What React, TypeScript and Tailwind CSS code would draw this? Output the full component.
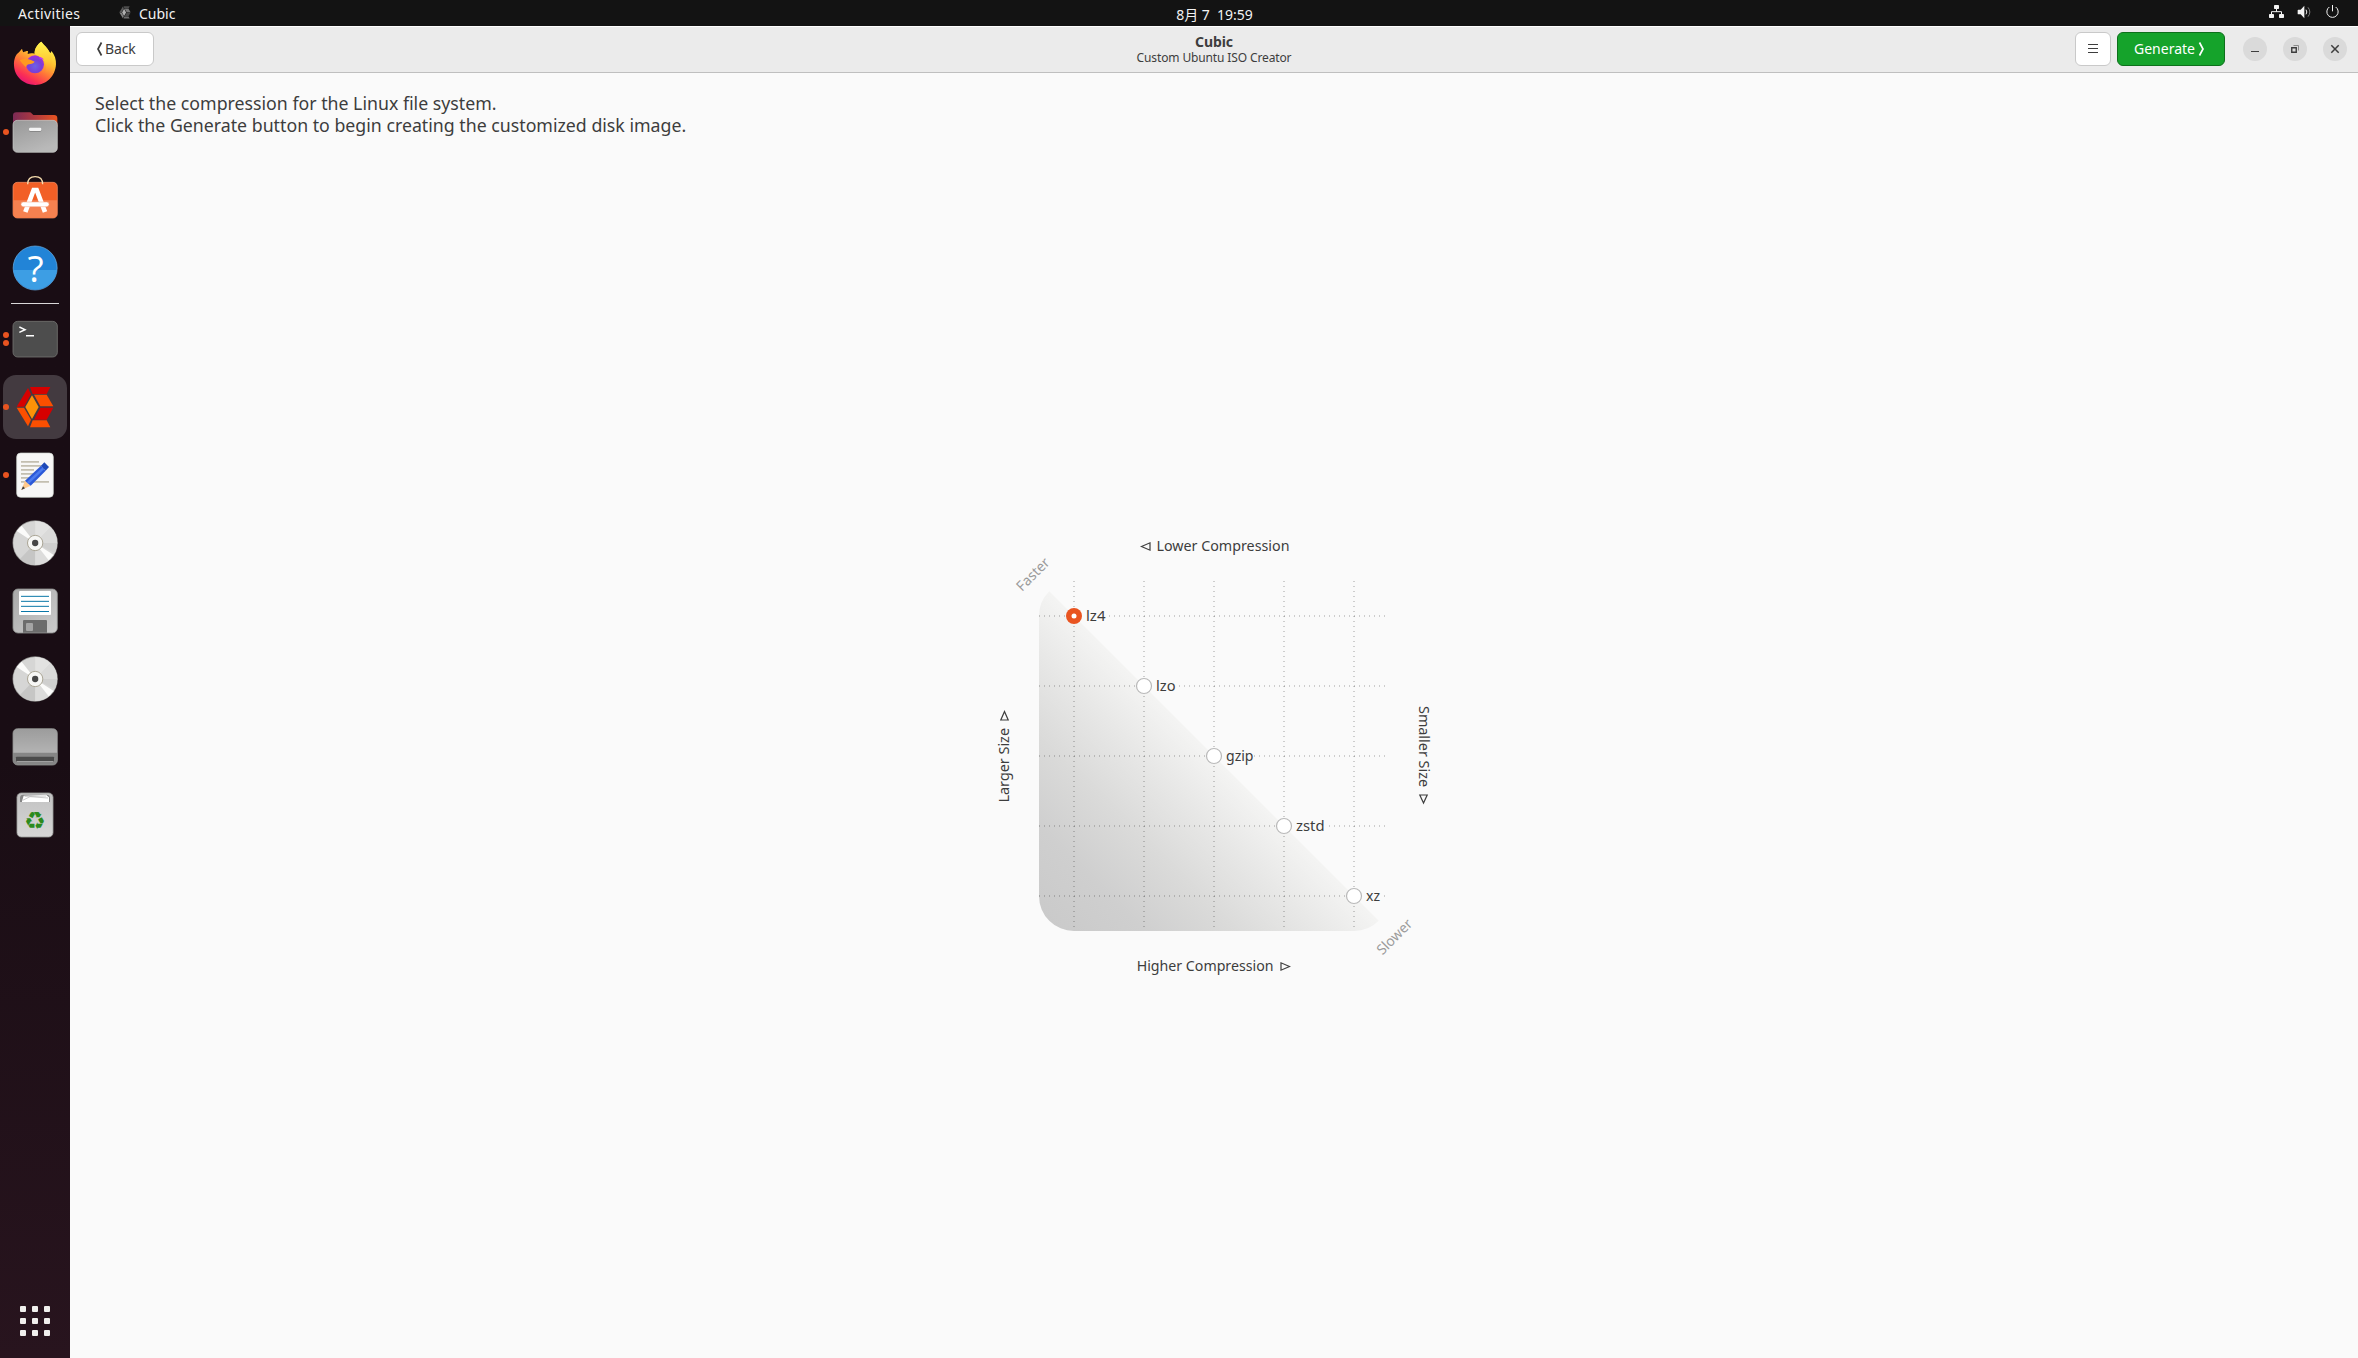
import type { ReactNode } from "react";

type DockEntry = {
  name: string;
  top: number;
  dots?: number;
  active?: boolean;
  art: ReactNode;
};

const Disc = ({ cy }: { cy: number }) => (
  <g>
    <circle cx="105.5" cy={cy} r="68" fill="#8b8b89" />
    <circle cx="105.5" cy={cy} r="66" fill="#d6d6d5" />
    <path d={`M105.5 ${cy}V${cy - 66}A66 66 0 0 1 152 ${cy - 47}Z`} fill="#e2e2e1" />
    <path d={`M105.5 ${cy}L152 ${cy - 47}A66 66 0 0 1 171.500 ${cy}Z`} fill="#dadad9" />
    <path d={`M105.5 ${cy}H171.500A66 66 0 0 1 164 ${cy + 30}Z`} fill="#cfcfce" />
    <path d={`M105.5 ${cy}V${cy + 66}A66 66 0 0 1 60 ${cy + 48}Z`} fill="#c6c6c5" />
    <path d={`M105.5 ${cy}L152 ${cy + 47}A66 66 0 0 1 105.5 ${cy + 66}Z`} fill="#dcdcdb" />
    <path d={`M105.5 ${cy}L50 ${cy - 36}L65 ${cy - 52}Z`} fill="#fbfbfa" />
    <path d={`M105.5 ${cy}L161 ${cy + 36}L146 ${cy + 52}Z`} fill="#fbfbfa" />
    <circle cx="105.5" cy={cy} r="23" fill="#f7f7f5" stroke="#aaa595" strokeWidth="3" />
    <circle cx="105.5" cy={cy} r="9.500" fill="#474747" />
  </g>
);

const favorites: DockEntry[] = [
  {
    name: "Firefox",
    top: 36,
    art: (
      <g>
        <defs>
          <linearGradient id="ff-body" x1="0.8" y1="0.05" x2="0.25" y2="1">
            <stop offset="0.05" stopColor="#fff14a" />
            <stop offset="0.35" stopColor="#ffbd2e" />
            <stop offset="0.6" stopColor="#ff7139" />
            <stop offset="0.82" stopColor="#fb2f55" />
            <stop offset="1" stopColor="#e2107c" />
          </linearGradient>
          <radialGradient id="ff-globe" cx="0.5" cy="0.6" r="0.6">
            <stop offset="0" stopColor="#6b62e8" />
            <stop offset="0.6" stopColor="#7a3fd6" />
            <stop offset="1" stopColor="#a52ee0" />
          </radialGradient>
          <linearGradient id="ff-tail" x1="0" y1="0" x2="0" y2="1">
            <stop offset="0" stopColor="#fff44f" />
            <stop offset="0.6" stopColor="#ffc933" />
            <stop offset="1" stopColor="#ff8a36" stopOpacity="0" />
          </linearGradient>
        </defs>
        <path d="M124 65C132 76 143 82 148 95C151 101 154 98 154 92C164 104 169 119 168 133C166 168 140 195 106 195C70 195 43 169 42 136C41 119 47 103 57 97L66 86C67 91 69 95 70 97C74 95 78 93 84 93L83 102C90 99 97 99 104 101C103 86 112 73 124 65Z" fill="url(#ff-body)" />
        <circle cx="105" cy="133" r="27" fill="url(#ff-globe)" />
        <path d="M104 101C103 86 112 73 124 65C131 78 152 88 155 118C155 138 146 155 133 163C142 148 140 124 123 112C115 107 108 106 104 101Z" fill="url(#ff-tail)" />
        <path d="M59 120C70 116 84 116 93 120L104 125C102 130 94 132 87 133C82 134 79 137 78 142C70 135 65 128 59 120Z" fill="#ff9a1f" />
        <path d="M119 111C124 111 128 114 132 119C126 117 122 118 118 115Z" fill="#c63bf0" />
      </g>
    ),
  },
  {
    name: "Files",
    top: 240,
    dots: 1,
    art: (
      <g>
        <defs>
          <linearGradient id="fl-back" x1="0" x2="1">
            <stop offset="0" stopColor="#7b2a55" />
            <stop offset="0.5" stopColor="#b03a3f" />
            <stop offset="1" stopColor="#e95420" />
          </linearGradient>
          <linearGradient id="fl-front" x1="0" y1="0" x2="0.5" y2="1">
            <stop offset="0" stopColor="#979797" />
            <stop offset="1" stopColor="#b9b9b9" />
          </linearGradient>
        </defs>
        <path d="M39 320V287Q39 277 49 277H88Q93 277 96 281L100 285H162Q172 285 172 295V320Z" fill="url(#fl-back)" />
        <rect x="39" y="301" width="133" height="96" rx="13" fill="url(#fl-front)" stroke="#c9ccc9" strokeWidth="2" />
        <rect x="87" y="325" width="37" height="10" rx="4" fill="#7e7e7e" />
        <rect x="87" y="323" width="37" height="10" rx="4" fill="#f4f4f4" />
      </g>
    ),
  },
  {
    name: "Ubuntu Software",
    top: 444,
    art: (
      <g>
        <rect x="39" y="487" width="133" height="107" rx="13" fill="#f25f26" stroke="#fb9467" strokeWidth="2" />
        <path d="M40 541H171V581Q171 593 159 593H52Q40 593 40 581Z" fill="#f58150" />
        <path d="M83 493C83 476 93 470 105.500 470C118 470 128 476 128 493" fill="none" stroke="#f6dcae" strokeWidth="4" />
        <path d="M76 576L101 510H110L135 576" fill="none" stroke="#fff" strokeWidth="14" />
        <rect x="63" y="546" width="84" height="14" rx="7" fill="#fff" stroke="#f3a27e" strokeWidth="1.500" />
      </g>
    ),
  },
  {
    name: "Help",
    top: 648,
    art: (
      <g>
        <circle cx="105.500" cy="744" r="66" fill="#2284d7" stroke="#6bb2ea" strokeWidth="2" />
        <path d="M40 750H171A66 66 0 0 1 40 750Z" fill="#3d9ee4" />
        <text x="107" y="786" textAnchor="middle" fontFamily="Open Sans, Noto Sans, sans-serif" fontSize="112" fill="#fff">?</text>
      </g>
    ),
  },
];

const running: DockEntry[] = [
  {
    name: "Terminal",
    top: 21,
    dots: 2,
    art: (
      <g>
        <rect x="39" y="64" width="133" height="107" rx="14" fill="#4d4d4d" stroke="#71716f" strokeWidth="2.500" />
        <path d="M58 81L75 89L58 97" fill="none" stroke="#fff" strokeWidth="4.500" />
        <rect x="78" y="105" width="24" height="4.500" fill="#fff" />
      </g>
    ),
  },
  {
    name: "Cubic",
    top: 225,
    dots: 1,
    active: true,
    art: (
      <g>
        <path d="M90 261H151L140 282H98Z" fill="#d60000" />
        <path d="M84 264L93 283L72 320H50Z" fill="#d60000" />
        <path d="M102 284H140L160 319H121Z" fill="#fb4f00" />
        <path d="M121 323H160L140 359H102Z" fill="#d60000" />
        <path d="M50 323H72L93 359L84 379Z" fill="#fb4f00" />
        <path d="M98 361H140L151 382H90Z" fill="#fb4f00" />
        <path d="M96 286L116 321L96 357L76 321Z" fill="#fd9207" />
      </g>
    ),
  },
  {
    name: "Text Editor",
    top: 429,
    dots: 1,
    art: (
      <g>
        <rect x="50" y="459" width="110" height="133" rx="12" fill="#f7f7f6" stroke="#cfd6cf" strokeWidth="2" />
        <path d="M63 485.500H117M63 497.500H125M63 509.500H102M63 521.500H112M63 533.500H90M63 545.500H147" stroke="#c3bfb0" strokeWidth="5.500" />
        <path d="M64 570L75 542L92 557Z" fill="#ffc98c" />
        <path d="M64 570L69 559L75 565Z" fill="#3d3d3d" />
        <path d="M75 542L123 497L137 512L92 557Z" fill="#2b59d8" />
        <path d="M80 547L128 502L133 507L86 552Z" fill="#4b7bee" />
        <path d="M123 497L133 487L147 501L137 512Z" fill="#1d49b8" />
      </g>
    ),
  },
  { name: "Disc", top: 633, art: <Disc cy={729} /> },
  {
    name: "Floppy",
    top: 27,
    art: (
      <g>
        <defs>
          <linearGradient id="fp" x1="0" y1="0" x2="1" y2="1">
            <stop offset="0" stopColor="#a9a9a9" />
            <stop offset="1" stopColor="#cccccc" />
          </linearGradient>
        </defs>
        <rect x="39" y="57" width="133" height="132" rx="15" fill="url(#fp)" stroke="#8d8f8d" strokeWidth="2.500" />
        <rect x="57" y="63" width="96" height="72" rx="3" fill="#fff" />
        <path d="M63 79H147M63 94H147M63 109H147M63 124.500H147" stroke="#0a77a8" strokeWidth="3" />
        <path d="M69 188V153Q69 150 72 150H138Q141 150 141 153V188Z" fill="#6c6c6c" />
        <rect x="78" y="159" width="21" height="24" rx="3" fill="#a5a5a5" />
      </g>
    ),
  },
  { name: "Disc", top: 231, art: <Disc cy={327} /> },
  {
    name: "Drive",
    top: 435,
    art: (
      <g>
        <defs>
          <linearGradient id="dr" x1="0" y1="0" x2="0" y2="1">
            <stop offset="0" stopColor="#9c9c9c" />
            <stop offset="1" stopColor="#b3b3b3" />
          </linearGradient>
        </defs>
        <rect x="39" y="476" width="133" height="109" rx="14" fill="#868686" stroke="#8e908e" strokeWidth="2.500" />
        <path d="M40 548V490Q40 477 53 477H158Q171 477 171 490V548Z" fill="url(#dr)" />
        <rect x="48" y="560" width="114" height="14" rx="2" fill="#4b4b4b" />
        <rect x="51" y="573" width="108" height="2" fill="#b6b6b6" />
      </g>
    ),
  },
  {
    name: "Trash",
    top: 639,
    art: (
      <g>
        <defs>
          <linearGradient id="tr" x1="0" y1="0" x2="0" y2="1">
            <stop offset="0" stopColor="#c2c2c2" />
            <stop offset="1" stopColor="#d6d6d6" />
          </linearGradient>
        </defs>
        <rect x="51" y="669" width="108" height="132" rx="13" fill="url(#tr)" stroke="#9a9c9a" strokeWidth="2.500" />
        <path d="M60 696V684Q60 674 70 674H140Q150 674 150 684V696Z" fill="#868686" />
        <path d="M66 694L71 677L138 674L147 682V696H66Z" fill="#fff" />
        <path d="M68 691L90 680L144 684M74 679L138 678" fill="none" stroke="#a8a8a8" strokeWidth="1.800" />
        <text x="105" y="777" textAnchor="middle" fontFamily="DejaVu Sans, sans-serif" fontSize="73" fill="#2b8a1d">♻</text>
      </g>
    ),
  },
];

function DockItem({ item }: { item: DockEntry }) {
  return (
    <div className="relative flex h-[68px] w-[70px] items-center pl-[3px]" title={item.name}>
      <div className={item.active ? "size-16 rounded-[13px] bg-[#433a40]" : "size-16"}>
        <svg viewBox={`9 ${item.top} 192 192`} className="size-16">
          {item.art}
        </svg>
      </div>
      {item.dots && (
        <div className="absolute top-0 left-[3px] flex h-full flex-col justify-center gap-[2.600px]">
          {Array.from({ length: item.dots }, (_, i) => (
            <span key={i} className="size-1.5 rounded-full bg-[#e95420]" />
          ))}
        </div>
      )}
    </div>
  );
}

const methods = [
  { label: "lz4", x: 1074, y: 616, from: 1086, width: 19.5, resume: 1109, selected: true },
  { label: "lzo", x: 1144, y: 686, from: 1156, width: 19.5, resume: 1179 },
  { label: "gzip", x: 1214, y: 756, from: 1226, width: 27.5, resume: 1254 },
  { label: "zstd", x: 1284, y: 826, from: 1296, width: 28.5, resume: 1329 },
  { label: "xz", x: 1354, y: 896, from: 1366, width: 14, resume: 1384 },
];

function CompressionChart() {
  return (
    <svg viewBox="984 530 460 452" className="h-[452px] w-[460px]" fontFamily="Noto Sans, sans-serif" fontSize="14" fill="#3d3d3d">
      <defs>
        <linearGradient id="ramp" gradientUnits="userSpaceOnUse" x1="1039" y1="931" x2="1214" y2="756">
          <stop offset="0" stopColor="#c9c9c9" />
          <stop offset="0.3" stopColor="#cfcfcf" />
          <stop offset="0.55" stopColor="#dadad9" />
          <stop offset="0.8" stopColor="#e8e8e7" />
          <stop offset="1" stopColor="#f4f4f3" />
        </linearGradient>
      </defs>
      <path d="M1049.250 591.250A35 35 0 0 0 1039 616V896A35 35 0 0 0 1074 931H1354A35 35 0 0 0 1378.750 920.750Z" fill="url(#ramp)" />
      <g stroke="#000" strokeOpacity="0.18" strokeWidth="2" strokeDasharray="1 4">
        {methods.map((m) => (
          <g key={m.label}>
            <path d={`M${m.x} 581V931`} />
            <path d={`M1039 ${m.y}H${m.x}`} />
            <path d={`M${m.resume} ${m.y}H1386`} />
          </g>
        ))}
      </g>
      {methods.map((m) => (
        <g key={m.label}>
          {m.selected ? (
            <>
              <circle cx={m.x} cy={m.y} r="8" fill="#e95420" />
              <circle cx={m.x} cy={m.y} r="2.500" fill="#fff" />
            </>
          ) : (
            <circle cx={m.x} cy={m.y} r="7.500" fill="#fff" stroke="#b9b9b9" strokeWidth="1.200" />
          )}
          <text x={m.from} y={m.y + 5} textLength={m.width} lengthAdjust="spacingAndGlyphs">
            {m.label}
          </text>
        </g>
      ))}
      <text x="1156.500" y="551" textLength="133" lengthAdjust="spacingAndGlyphs">Lower Compression</text>
      <text x="1136.700" y="971" textLength="136.800" lengthAdjust="spacingAndGlyphs">Higher Compression</text>
      <text transform="translate(1009 802.500) rotate(-90)" textLength="74.500" lengthAdjust="spacingAndGlyphs">Larger Size</text>
      <text transform="translate(1419 706) rotate(90)" textLength="81" lengthAdjust="spacingAndGlyphs">Smaller Size</text>
      <g fill="#9a9a9a">
        <text transform="translate(1022 592) rotate(-45)" textLength="40.500" lengthAdjust="spacingAndGlyphs">Faster</text>
        <text transform="translate(1382.500 955.500) rotate(-45)" textLength="43.500" lengthAdjust="spacingAndGlyphs">Slower</text>
      </g>
      <g fill="none" stroke="#3d3d3d" strokeWidth="1.200">
        <path d="M1141.500 546.500L1150 542.800V550.200Z" />
        <path d="M1289.500 966.500L1281 962.800V970.200Z" />
        <path d="M1004.500 711.500L1000.800 720H1008.200Z" />
        <path d="M1423.500 803L1419.800 795H1427.200Z" />
      </g>
    </svg>
  );
}

function WindowButton({ children }: { children: ReactNode }) {
  return (
    <button className="flex size-6 items-center justify-center rounded-full bg-[#dadada]">
      <svg viewBox="0 0 24 24" className="size-6" fill="none" stroke="#3d3d3d">
        {children}
      </svg>
    </button>
  );
}

export default function App() {
  return (
    <div className="flex h-[1358px] w-[2358px] flex-col overflow-hidden bg-[#fafafa] font-['Noto_Sans','Noto_Sans_CJK_SC',sans-serif] text-sm text-[#3d3d3d]">
      <header className="grid h-[26px] shrink-0 grid-cols-[1fr_auto_1fr] bg-[#131313] pl-[71px] leading-[26px] text-[#f2f2f2]">
        <div className="-ml-[71px] flex items-center pl-[18px]">
          <span className="w-[101px] tracking-[0.4px]">Activities</span>
          <svg viewBox="48 258 114 128" className="mt-[-2px] mr-2 h-[13px] w-3">
            <path d="M90 261H151L140 282H98Z" fill="#4c4c4c" />
            <path d="M84 264L93 283L72 320H50Z" fill="#5a5a5a" />
            <path d="M102 284H140L160 319H121Z" fill="#787878" />
            <path d="M121 323H160L140 359H102Z" fill="#4a4a4a" />
            <path d="M50 323H72L93 359L84 379Z" fill="#808080" />
            <path d="M98 361H140L151 382H90Z" fill="#6c6c6c" />
            <path d="M96 286L116 321L96 357L76 321Z" fill="#b0b0b0" />
          </svg>
          <span>Cubic</span>
        </div>
        <div className="pt-[3px] leading-6 whitespace-pre">8月 7  19:59</div>
        <div className="flex justify-end pr-[18px]">
          <svg viewBox="654 0 216 78" className="h-[26px] w-[72px]" fill="#f2f2f2">
            <rect x="672" y="15" width="15" height="12" rx="2" />
            <rect x="657" y="42" width="15" height="12" rx="2" />
            <rect x="687" y="42" width="15" height="12" rx="2" />
            <path d="M679.500 26V35M664.500 43V35H694.500V43" fill="none" stroke="#f2f2f2" strokeWidth="3" />
            <path d="M745 29H752L763 17V55L752 43H745Q743 43 743 41V31Q743 29 745 29Z" />
            <path d="M768 29Q773 36 768 43" fill="none" stroke="#f2f2f2" strokeWidth="3" />
            <path d="M774 22Q785 36 774 50" fill="none" stroke="#7d7d7d" strokeWidth="3" />
            <path d="M838 21A17 17 0 1 0 857 21" fill="none" stroke="#f2f2f2" strokeWidth="3" />
            <path d="M847.500 15V34" stroke="#f2f2f2" strokeWidth="3" />
          </svg>
        </div>
      </header>

      <div className="flex min-h-0 flex-1">
        <aside className="flex w-[70px] shrink-0 flex-col bg-linear-to-b from-[#190d14] from-55% to-[#28141e] pt-1">
          {favorites.map((item, i) => (
            <DockItem key={i} item={item} />
          ))}
          <div className="flex h-[3px] justify-center pt-px">
            <div className="h-px w-12 bg-[#d9d7d8]" />
          </div>
          {running.map((item, i) => (
            <DockItem key={i} item={item} />
          ))}
          <div className="mt-auto mb-[22px] ml-5 grid w-[30px] grid-cols-3 gap-1.5">
            {Array.from({ length: 9 }, (_, i) => (
              <span key={i} className="size-1.5 rounded-[1px] bg-[#f1efed]" />
            ))}
          </div>
        </aside>

        <main className="flex flex-1 flex-col">
          <div className="grid h-[47px] shrink-0 grid-cols-[1fr_auto_1fr] items-center border-t border-b border-t-white border-b-[#bfbfbf] bg-[#ebebeb]">
            <div className="pb-px pl-1.5">
              <button className="flex h-[34px] w-[78px] items-center rounded-md border border-[#c9c9c9] bg-white pl-[19px]">
                <svg viewBox="0 0 7 16" className="mr-[2px] h-4 w-[7px]" fill="none" stroke="#3d3d3d" strokeWidth="1.700">
                  <path d="M5.500 1.500L2 8L5.500 14.500" />
                </svg>
                <span className="tracking-[-0.1px]">Back</span>
              </button>
            </div>
            <div className="flex flex-col items-center">
              <h1 className="leading-4 font-bold tracking-[-0.1px]">Cubic</h1>
              <p className="text-xs leading-[15px] tracking-[-0.13px]">Custom Ubuntu ISO Creator</p>
            </div>
            <div className="flex items-center justify-end pr-[11px] pb-px">
              <button className="flex h-[34px] w-9 items-center justify-center rounded-md border border-[#c9c9c9] bg-white">
                <svg viewBox="0 0 10 10" className="size-2.5" stroke="#3d3d3d">
                  <path d="M0 0.500H10M0 4.500H10M0 8.500H10" />
                </svg>
              </button>
              <button className="mr-[18px] ml-1.5 flex h-[34px] w-[108px] items-center rounded-md border border-[#0d701b] bg-[#15a32b] pl-4 text-white">
                <span>Generate</span>
                <svg viewBox="0 0 7 16" className="ml-[3px] h-4 w-[7px]" fill="none" stroke="#fff" strokeWidth="1.700">
                  <path d="M1.500 1.500L5 8L1.500 14.500" />
                </svg>
              </button>
              <div className="flex gap-4">
                <WindowButton>
                  <path d="M8 14.500H16" />
                </WindowButton>
                <WindowButton>
                  <path d="M8.750 10.750H13.250V15.250H8.750Z" strokeWidth="1.400" />
                  <path d="M10.500 8.500H15.500V13.500" stroke="#8b8b8b" />
                </WindowButton>
                <WindowButton>
                  <path d="M8.300 8.300L15.700 15.700M15.700 8.300L8.300 15.700" strokeWidth="1.500" />
                </WindowButton>
              </div>
            </div>
          </div>

          <section className="flex flex-1 flex-col pt-[19px]">
            <p className="pb-[18px] pl-[25px] text-[17.740px] leading-[22px]">
              Select the compression for the Linux file system.
              <br />
              Click the Generate button to begin creating the customized disk image.
            </p>
            <div className="flex flex-1 items-center justify-center">
              <CompressionChart />
            </div>
          </section>
        </main>
      </div>
    </div>
  );
}
